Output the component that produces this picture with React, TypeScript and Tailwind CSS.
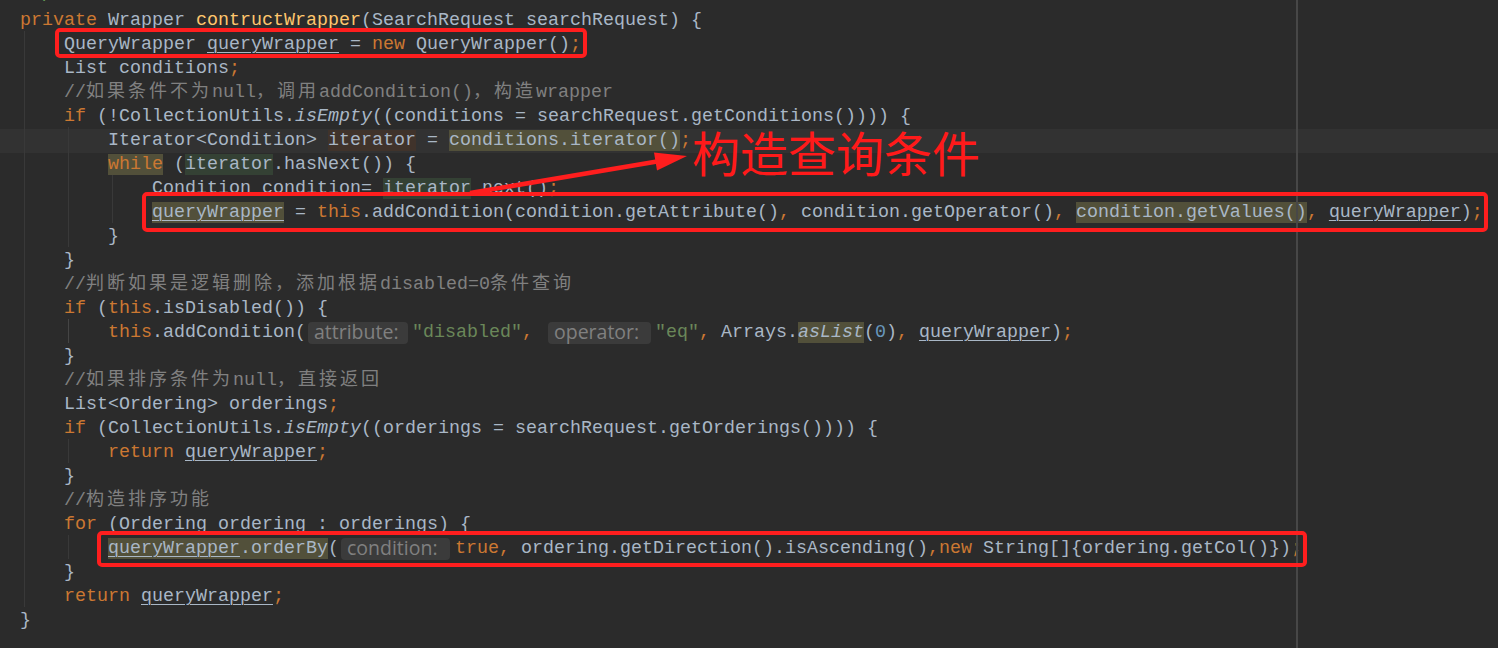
import React from "react";

const kw = "text-[#cc7832]";
const fn = "text-[#ffc66d]";
const cm = "text-[#808080]";
const str = "text-[#6a8759]";
const num = "text-[#6897bb]";
const ul = "underline decoration-[#a9b7c6] underline-offset-[3px] decoration-1";
const olive = "bg-[#52503a]";
const green = "bg-[#344134]";
const brown = "bg-[#40332b]";

function L({ children, cls = "" }: { children?: React.ReactNode; cls?: string }) {
  return <div className={`h-[24px] leading-[24px] whitespace-pre pl-[20px] ${cls}`}>{children}</div>;
}

function C({ t }: { t: string }) {
  return <span className="font-['Noto_Sans_CJK_SC',sans-serif] text-[18px] leading-[0px] tracking-[3px]">{t}</span>;
}

function Hint({ t, cls }: { t: string; cls: string }) {
  return (
    <span
      className={`inline-block align-top relative top-[1px] h-[22px] leading-[19px] rounded-[4px] bg-[#3b3b3b] text-[#808080] font-['Open_Sans',sans-serif] text-[19.5px] pl-[6px] tracking-normal ${cls}`}
    >
      {t}
    </span>
  );
}

const Semi = () => <span className={kw}>;</span>;
const Comma = () => <span className={kw}>,</span>;

export default function App() {
  return (
    <div className="relative w-[1498px] h-[648px] overflow-hidden bg-[#2b2b2b]">
      <div className="mt-[-15px] font-['Liberation_Mono',monospace] text-[18.33px] text-[#a9b7c6]">
        <L><span className="text-[#629755]"> */</span></L>
        <L>
          <span className={kw}>private</span> Wrapper <span className={fn}>contructWrapper</span>(SearchRequest searchRequest) {"{"}
        </L>
        <L>
          {"    "}QueryWrapper <span className={ul}>queryWrapper</span> = <span className={kw}>new</span> QueryWrapper()<Semi />
        </L>
        <L>
          {"    "}List conditions<Semi />
        </L>
        <L>
          {"    "}
          <span className={cm}>
            //<C t="如果条件不为" />null<C t="，调用" />addCondition()<C t="，构造" />wrapper
          </span>
        </L>
        <L>
          {"    "}<span className={kw}>if</span> (!CollectionUtils.<span className="italic">isEmpty</span>((conditions = searchRequest.getConditions()))) {"{"}
        </L>
        <L cls="bg-[#323232]">
          {"        "}Iterator&lt;Condition&gt; <span className={brown}>iterator</span> = <span className={olive}>conditions.iterator()</span><Semi />
        </L>
        <L>
          {"        "}<span className={`${kw} ${olive}`}>while</span> (<span className={green}>iterator</span>.hasNext()) {"{"}
        </L>
        <L>
          {"            "}Condition condition= <span className={green}>iterator</span>.next()<Semi />
        </L>
        <L>
          {"            "}<span className={`${ul} ${olive}`}>queryWrapper</span> = <span className={kw}>this</span>.addCondition(condition.getAttribute()<Comma /> condition.getOperator()<Comma /> <span className={olive}>condition.getValues()</span><Comma /> <span className={ul}>queryWrapper</span>)<Semi />
        </L>
        <L>{"        }"}</L>
        <L>{"    }"}</L>
        <L>
          {"    "}
          <span className={cm}>
            //<C t="判断如果是逻辑删除，添加根据" />disabled=0<C t="条件查询" />
          </span>
        </L>
        <L>
          {"    "}<span className={kw}>if</span> (<span className={kw}>this</span>.isDisabled()) {"{"}
        </L>
        <L>
          {"        "}<span className={kw}>this</span>.addCondition(<Hint t="attribute:" cls="ml-[2px] w-[100px] mr-[4px]" /><span className={str}>"disabled"</span><Comma /> <Hint t="operator:" cls="ml-[4px] w-[103px] mr-[4px]" /><span className={str}>"eq"</span><Comma /> Arrays.<span className={`italic ${olive}`}>asList</span>(<span className={num}>0</span>)<Comma /> <span className={ul}>queryWrapper</span>)<Semi />
        </L>
        <L>{"    }"}</L>
        <L>
          {"    "}
          <span className={cm}>
            //<C t="如果排序条件为" />null<C t="，直接返回" />
          </span>
        </L>
        <L>
          {"    "}List&lt;Ordering&gt; orderings<Semi />
        </L>
        <L>
          {"    "}<span className={kw}>if</span> (CollectionUtils.<span className="italic">isEmpty</span>((orderings = searchRequest.getOrderings()))) {"{"}
        </L>
        <L>
          {"        "}<span className={kw}>return</span> <span className={ul}>queryWrapper</span><Semi />
        </L>
        <L>{"    }"}</L>
        <L>
          {"    "}
          <span className={cm}>
            //<C t="构造排序功能" />
          </span>
        </L>
        <L>
          {"    "}<span className={kw}>for</span> (Ordering ordering : orderings) {"{"}
        </L>
        <L>
          {"        "}<span className={olive}><span className={ul}>queryWrapper</span>.orderBy</span>(<Hint t="condition:" cls="ml-[2px] w-[109px] mr-[5px]" /><span className={kw}>true</span><Comma /> ordering.getDirection().isAscending()<Comma /><span className={kw}>new</span> String[]{"{"}ordering.getCol(){"}"})<Semi />
        </L>
        <L>{"    }"}</L>
        <L>
          {"    "}<span className={kw}>return</span> <span className={ul}>queryWrapper</span><Semi />
        </L>
        <L>{"}"}</L>
      </div>

      {/* indent guides */}
      <div className="absolute left-[24px] top-[31px] h-[576px] w-px bg-[#393939]" />
      <div className="absolute left-[68px] top-[127px] h-[120px] w-px bg-[#393939]" />
      <div className="absolute left-[112px] top-[175px] h-[48px] w-px bg-[#393939]" />
      <div className="absolute left-[68px] top-[319px] h-[24px] w-px bg-[#454545]" />
      <div className="absolute left-[68px] top-[439px] h-[24px] w-px bg-[#393939]" />
      <div className="absolute left-[68px] top-[535px] h-[24px] w-px bg-[#393939]" />

      {/* right margin */}
      <div className="absolute left-[1296px] top-0 h-[648px] w-[2px] bg-[#474747]" />

      {/* annotations */}
      <div className="absolute left-[55px] top-[28px] w-[532px] h-[30px] border-[4px] border-[#ff1e1e] rounded-[5px]" />
      <div className="absolute left-[142px] top-[192px] w-[1346px] h-[40px] border-[4px] border-[#ff1e1e] rounded-[5px]" />
      <div className="absolute left-[97px] top-[531px] w-[1210px] h-[36px] border-[4px] border-[#ff1e1e] rounded-[5px]" />

      <svg className="absolute left-0 top-0 w-[1498px] h-[648px] pointer-events-none" viewBox="0 0 1498 648">
        <line x1="470" y1="193" x2="660" y2="161" stroke="#ff1e1e" strokeWidth="4.5" />
        <polygon points="687,156 654,152.6 657,170.4" fill="#ff1e1e" />
      </svg>
      <div className="absolute left-[692px] top-[127px] font-['Noto_Sans_CJK_SC',sans-serif] text-[48px] leading-[48px] text-[#ff1a1a]">
        构造查询条件
      </div>
    </div>
  );
}
